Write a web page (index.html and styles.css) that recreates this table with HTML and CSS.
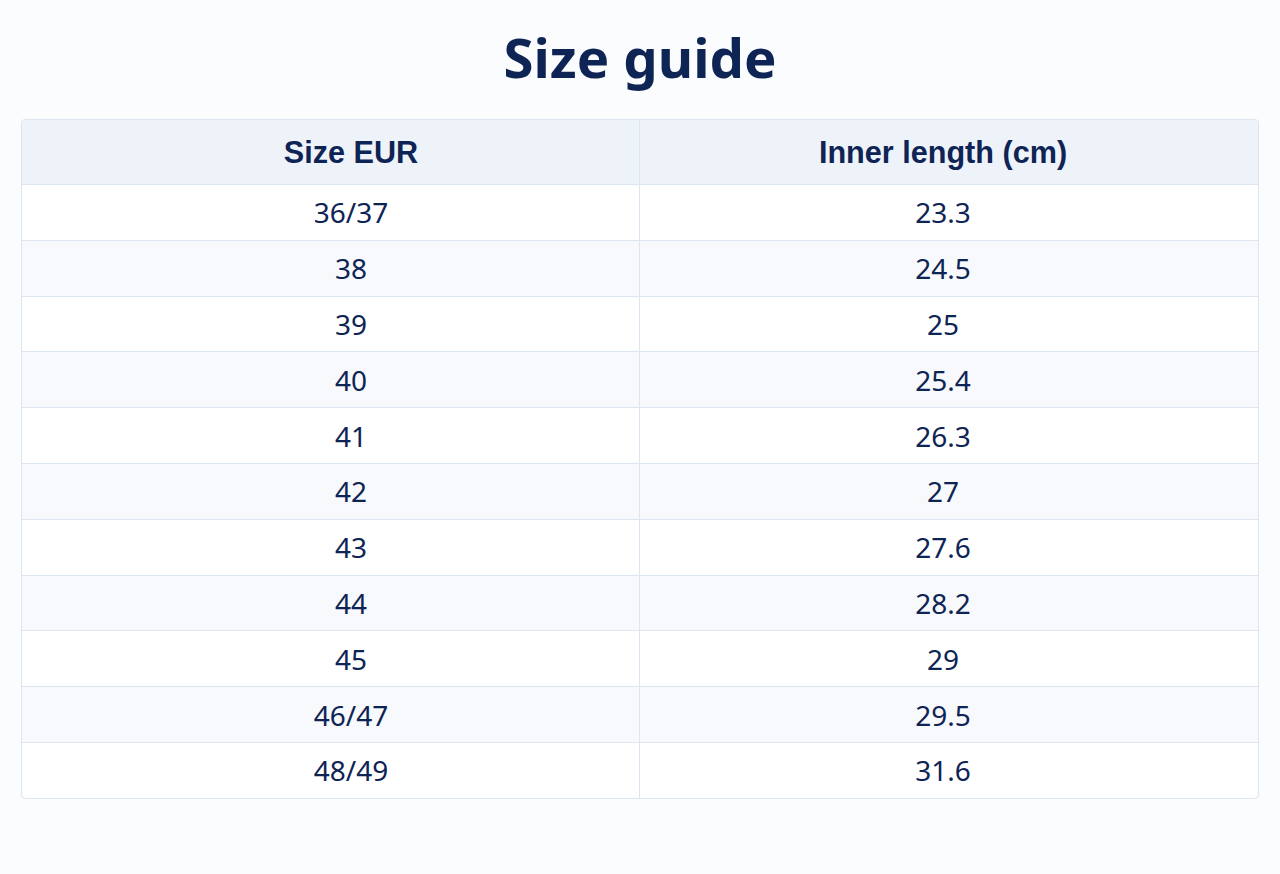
FILE: index.html
```html
<!DOCTYPE html>
<html lang="en">
<head>
<meta charset="utf-8">
<title>Size guide</title>
<link rel="stylesheet" href="styles.css">
</head>
<body>
<main class="page">
  <h1 class="title">Size guide</h1>
  <table class="sizes">
    <thead>
      <tr><th>Size EUR</th><th>Inner length (cm)</th></tr>
    </thead>
    <tbody>
      <tr><td>36/37</td><td>23.3</td></tr>
      <tr><td>38</td><td>24.5</td></tr>
      <tr><td>39</td><td>25</td></tr>
      <tr><td>40</td><td>25.4</td></tr>
      <tr><td>41</td><td>26.3</td></tr>
      <tr><td>42</td><td>27</td></tr>
      <tr><td>43</td><td>27.6</td></tr>
      <tr><td>44</td><td>28.2</td></tr>
      <tr><td>45</td><td>29</td></tr>
      <tr><td>46/47</td><td>29.5</td></tr>
      <tr><td>48/49</td><td>31.6</td></tr>
    </tbody>
  </table>
</main>
</body>
</html>
```

FILE: styles.css
```css
html, body {
  margin: 0;
  padding: 0;
  background: #fbfcfd;
}
body {
  color: #0e2454;
  font-family: "Noto Sans", sans-serif;
}
.page {
  padding: 0 21px;
}
.title {
  margin: 0;
  height: 119px;
  padding-bottom: 4px;
  box-sizing: border-box;
  text-align: center;
  font-family: "Noto Sans", sans-serif;
  font-weight: bold;
  font-size: 54.5px;
  line-height: 115px;
  color: #0e2454;
}
.sizes {
  width: 100%;
  border-collapse: separate;
  border-spacing: 0;
  border: 1px solid #dde5f1;
  border-radius: 4px;
  overflow: hidden;
  background: #ffffff;
}
.sizes th,
.sizes td {
  width: 50%;
  text-align: center;
  padding: 0;
}
.sizes th:first-child,
.sizes td:first-child {
  padding-left: 41px;
  border-right: 1px solid #dde5f1;
}
.sizes th:last-child,
.sizes td:last-child {
  padding-right: 12px;
}
.sizes th {
  height: 64px;
  background: #eef2f9;
  font-family: "Liberation Sans", Arial, sans-serif;
  font-weight: bold;
  font-size: 30.6px;
  color: #0e2454;
  border-bottom: 1px solid #dde5f1;
}
.sizes td {
  height: 54.8px;
  font-size: 28px;
  color: #0e2454;
  border-bottom: 1px solid #dde5f1;
}
.sizes tbody tr:nth-child(even) td {
  background: #f7f9fc;
}
.sizes tbody tr:last-child td {
  border-bottom: none;
}
```
